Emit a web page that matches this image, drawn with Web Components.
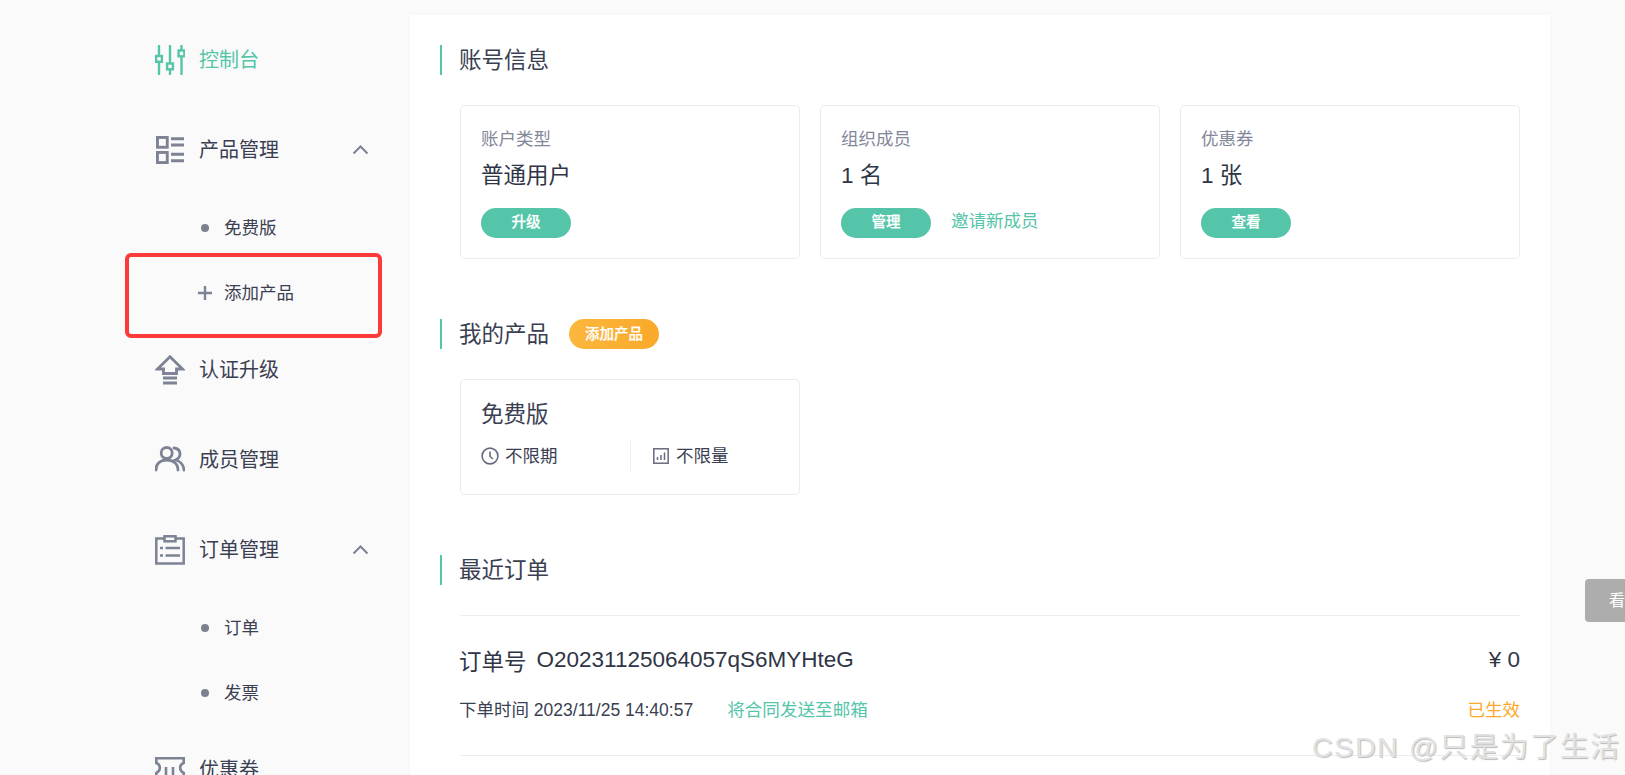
<!DOCTYPE html>
<html lang="zh">
<head>
<meta charset="utf-8">
<title>控制台</title>
<style>
html, body { margin: 0; height: 775px; overflow: hidden; background: #fafafa; }
body { font-family: "Liberation Sans", "Noto Sans CJK SC", sans-serif; color: #2f3546; position: relative; }
.page { display: flex; align-items: flex-start; padding-top: 15px; height: 760px; }
</style>
</head>
<body>
<template id="nav-item-tpl">
<style>
:host { display: flex; align-items: center; height: 90px; padding-left: 155px; box-sizing: border-box; font-size: 20px; color: #3a4052; white-space: nowrap; }
:host([active]) { color: #55c5a9; }
.icon { width: 30px; height: 30px; margin-right: 14px; flex: none; display: flex; }
.label { padding-bottom: 3px; }
.chev { margin-left: auto; margin-right: 41px; display: none; }
:host([open]) .chev { display: block; }
</style>
<span class="icon"><slot name="icon"></slot></span><span class="label"><slot></slot></span>
<svg class="chev" width="17" height="10" viewBox="0 0 17 10" fill="none" stroke="#7d8294" stroke-width="2"><path d="M1.500 8.500 8.500 1.500 15.500 8.500"/></svg>
</template>

<template id="nav-sub-tpl">
<style>
:host { display: flex; align-items: center; height: 65px; padding-left: 197px; box-sizing: border-box; font-size: 17.500px; color: #3a4052; white-space: nowrap; }
.mark { width: 16px; height: 16px; margin-right: 11px; display: flex; align-items: center; justify-content: center; }
.dot { width: 8px; height: 8px; border-radius: 50%; background: #7d8090; }
.label { padding-bottom: 2px; }
svg { display: none; }
:host([plus]) svg { display: block; }
:host([plus]) .dot { display: none; }
</style>
<span class="mark"><span class="dot"></span><svg width="16" height="16" viewBox="0 0 16 16" stroke="#7d8294" stroke-width="2.400"><path d="M8 1v14M1 8h14"/></svg></span><span class="label"><slot></slot></span>
</template>

<template id="section-title-tpl">
<style>
:host { display: flex; align-items: center; height: 30px; border-left: 2px solid #55c5a9; padding-left: 17px; font-size: 22.500px; color: #3a4052; }
.text { padding-bottom: 4px; }
.extra { margin-left: 20px; display: flex; }
</style>
<span class="text"><slot></slot></span><span class="extra"><slot name="extra"></slot></span>
</template>

<template id="pill-btn-tpl">
<style>
:host { display: inline-flex; align-items: center; justify-content: center; width: 90px; height: 30px; box-sizing: border-box; padding-bottom: 3px; border-radius: 15px; background: #55c5a9; color: #fff; font-size: 14.500px; font-weight: 500; -webkit-text-stroke: .25px #fff; }
:host([warn]) { background: linear-gradient(90deg, #fbb73e, #faa92a); }
</style>
<slot></slot>
</template>

<template id="info-card-tpl">
<style>
:host { display: block; width: 340px; height: 154px; box-sizing: border-box; border: 1px solid #e9ecf2; border-radius: 5px; background: #fff; padding: 20px 20px 0; }
.label { font-size: 17.500px; line-height: 26px; color: #83879a; }
.value { font-size: 22.500px; line-height: 34px; margin-top: 7px; color: #2f3546; }
.foot { display: flex; align-items: flex-start; gap: 20px; margin-top: 15px; font-size: 17.500px; line-height: 26px; color: #55c5a9; }
</style>
<div class="label"><slot name="label"></slot></div>
<div class="value"><slot name="value"></slot></div>
<div class="foot"><slot></slot></div>
</template>

<template id="product-card-tpl">
<style>
:host { display: block; width: 340px; height: 116px; box-sizing: border-box; border: 1px solid #e9ecf2; border-radius: 5px; background: #fff; padding: 18px 20px 0; }
.name { font-size: 22.500px; line-height: 34px; color: #3a4052; }
.meta { display: flex; align-items: center; height: 30px; margin-top: 9px; font-size: 17.500px; color: #3a4052; }
.cell { display: flex; align-items: center; gap: 6px; width: 149px; flex: none; box-sizing: border-box; }
.cell + .cell { border-left: 1px solid #eef0f4; height: 30px; padding-left: 22px; gap: 7px; }
.txt { padding-bottom: 3px; }
svg { display: block; }
</style>
<div class="name"><slot name="name"></slot></div>
<div class="meta">
<div class="cell"><svg width="18" height="18" viewBox="0 0 18 18" fill="none" stroke="#666b7d" stroke-width="1.600"><circle cx="9" cy="9" r="7.900"/><path d="M9 4.500V9.500L12 12"/></svg><span class="txt"><slot name="time"></slot></span></div>
<div class="cell"><svg width="16" height="16" viewBox="0 0 16 16" fill="none" stroke="#666b7d" stroke-width="1.500"><rect x=".8" y=".8" width="14.400" height="14.400"/><path d="M4.500 12V9M8 12V7M11.500 12V4.500"/></svg><span class="txt"><slot name="amount"></slot></span></div>
</div>
</template>

<template id="order-row-tpl">
<style>
:host { display: block; height: 141px; box-sizing: border-box; border-top: 1px solid #ebedf2; border-bottom: 1px solid #ebedf2; }
.line { display: flex; align-items: center; justify-content: space-between; }
.top { height: 30px; margin-top: 29px; font-size: 22.500px; color: #2f3546; }
.bottom { height: 26px; margin-top: 20px; font-size: 17.500px; color: #3a4052; }
.link { color: #55c5a9; font-size: 17.600px; margin-left: 34px; }
.state { color: #faa92a; font-size: 17.500px; }
.left { display: flex; align-items: center; margin-left: -1px; }
.no { margin-left: 10px; }
</style>
<div class="line top"><span class="left"><slot name="label"></slot><span class="no"><slot name="no"></slot></span></span><slot name="price"></slot></div>
<div class="line bottom"><span class="left"><slot name="time"></slot><span class="link"><slot name="link"></slot></span></span><span class="state"><slot name="state"></slot></span></div>
</template>

<template id="side-nav-tpl">
<style>:host { display: block; flex: none; width: 410px; }</style>
<slot></slot>
</template>

<template id="main-panel-tpl">
<style>
:host { display: block; width: 1140px; box-sizing: border-box; background: #fff; padding: 30px 30px 0; height: 800px; box-shadow: 0 0 6px rgba(0,0,0,.02); }
</style>
<slot></slot>
</template>

<div class="page">
<side-nav>
<nav-item active>
<svg slot="icon" width="30" height="30" viewBox="0 0 30 30" fill="none" stroke="#55c5a9" stroke-width="2.400"><path d="M4 0V11M4 17V30M15 0V18M15 24V30M26.500 0V5M26.500 11V30"/><rect x="1.100" y="11" width="5.800" height="5.800"/><rect x="12.100" y="18.500" width="5.800" height="5.800"/><rect x="23.600" y="5.500" width="5.800" height="5.800"/></svg>
控制台</nav-item>
<nav-item open>
<svg slot="icon" width="30" height="30" viewBox="0 0 30 30" fill="none" stroke="#7d8294" stroke-width="2.900"><rect x="2.450" y="2.450" width="9.800" height="9.800"/><rect x="2.450" y="17.450" width="9.800" height="10.100"/><path d="M16 3.700H29M16 10H29M16 19.300H29M16 25.700H29"/></svg>
产品管理</nav-item>
<nav-sub>免费版</nav-sub>
<nav-sub plus>添加产品</nav-sub>
<nav-item>
<svg slot="icon" width="30" height="30" viewBox="0 0 30 30" fill="none" stroke="#7d8294" stroke-width="2.800"><path d="M15 1.700 2.500 14H8.500V18.500H21.500V14H27.500Z"/><path d="M8 23H22M8 28H22"/></svg>
认证升级</nav-item>
<nav-item>
<svg slot="icon" width="30" height="30" viewBox="0 0 30 30" fill="none" stroke="#7d8294" stroke-width="2.800" stroke-linecap="round"><circle cx="11.700" cy="8" r="5.500"/><path d="M1 25C1 18 6 15 11.700 15S23 18 23 25"/><path d="M19 3C23 3.500 25 6 25 9C25 12 23 14 20.500 15C25 16 28.500 20 29 25"/></svg>
成员管理</nav-item>
<nav-item open>
<svg slot="icon" width="30" height="30" viewBox="0 0 30 30" fill="none" stroke="#7d8294" stroke-width="2.500"><path d="M9 3.500H1.300V28.500H28.700V3.500H21"/><rect x="9.500" y="1.300" width="11" height="5"/><path d="M5 13H8M10.500 13H25M5 20.500H8M10.500 20.500H25"/></svg>
订单管理</nav-item>
<nav-sub>订单</nav-sub>
<nav-sub>发票</nav-sub>
<nav-item>
<svg slot="icon" width="30" height="30" viewBox="0 0 30 30" fill="none" stroke="#7d8294" stroke-width="2.600"><path d="M1.300 3.200H28.700V8C24 9.500 24 16 28.700 18V28H1.300V18C6 16 6 9.500 1.300 8Z"/><path d="M11 12V24M18 12V24"/></svg>
优惠券</nav-item>
</side-nav>

<main-panel>
<section-title>账号信息</section-title>
<div style="display:flex;gap:20px;margin:30px 0 0 20px">
<info-card><span slot="label">账户类型</span><span slot="value">普通用户</span><pill-btn>升级</pill-btn></info-card>
<info-card><span slot="label">组织成员</span><span slot="value">1 名</span><pill-btn>管理</pill-btn><span>邀请新成员</span></info-card>
<info-card><span slot="label">优惠券</span><span slot="value">1 张</span><pill-btn>查看</pill-btn></info-card>
</div>
<section-title style="margin-top:60px">我的产品<pill-btn slot="extra" warn>添加产品</pill-btn></section-title>
<div style="margin:30px 0 0 20px">
<product-card><span slot="name">免费版</span><span slot="time">不限期</span><span slot="amount">不限量</span></product-card>
</div>
<section-title style="margin-top:60px">最近订单</section-title>
<div style="margin:30px 0 0 20px">
<order-row><span slot="label">订单号</span><span slot="no">O20231125064057qS6MYHteG</span><span slot="price">¥ 0</span><span slot="time">下单时间 2023/11/25 14:40:57</span><span slot="link">将合同发送至邮箱</span><span slot="state">已生效</span></order-row>
</div>
</main-panel>
</div>

<side-tab>看</side-tab>
<water-mark>CSDN @只是为了生活</water-mark>
<red-box></red-box>

<template id="side-tab-tpl">
<style>
:host { position: absolute; left: 1585px; top: 579px; width: 70px; height: 43px; box-sizing: border-box; padding-left: 24px; background: #adadad; border-radius: 4px 0 0 4px; color: #fff; font-size: 16px; line-height: 43px; }
</style>
<slot></slot>
</template>

<template id="water-mark-tpl">
<style>
:host { position: absolute; left: 1312px; top: 727px; font-size: 28.500px; line-height: 40px; letter-spacing: 1.650px; white-space: nowrap; color: #e2e2e2; text-shadow: 1px 1px 1px #bbb; }
</style>
<slot></slot>
</template>

<template id="red-box-tpl">
<style>
:host { position: absolute; left: 125px; top: 253px; width: 257px; height: 85px; box-sizing: border-box; border: 4px solid #fd3a3a; border-radius: 6px; }
</style>
</template>

<script>
function define(tag, tplId) {
    customElements.define(tag, class extends HTMLElement {
        constructor() {
            super();
            this.attachShadow({ mode: 'open' });
            this.shadowRoot.appendChild(document.getElementById(tplId).content.cloneNode(true));
        }
    });
}

define('nav-item', 'nav-item-tpl');
define('nav-sub', 'nav-sub-tpl');
define('section-title', 'section-title-tpl');
define('pill-btn', 'pill-btn-tpl');
define('info-card', 'info-card-tpl');
define('product-card', 'product-card-tpl');
define('order-row', 'order-row-tpl');
define('side-nav', 'side-nav-tpl');
define('main-panel', 'main-panel-tpl');
define('side-tab', 'side-tab-tpl');
define('water-mark', 'water-mark-tpl');
define('red-box', 'red-box-tpl');
</script>
</body>
</html>
